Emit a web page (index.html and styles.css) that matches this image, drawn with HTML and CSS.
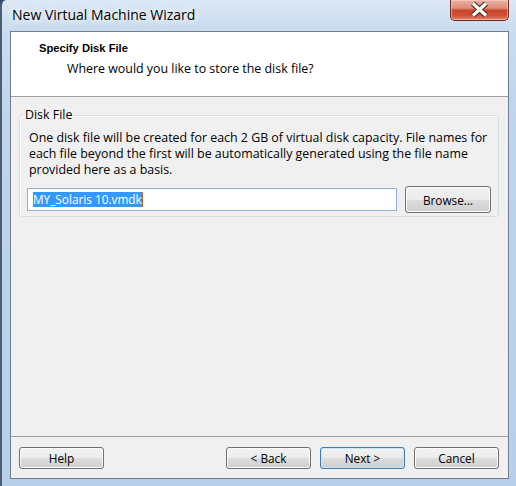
FILE: index.html
```html
<!DOCTYPE html>
<html>
<head>
<meta charset="utf-8">
<title>New Virtual Machine Wizard</title>
<link rel="stylesheet" href="styles.css">
</head>
<body>
<div class="window">
  <div class="titlebar">
    <span class="title">New Virtual Machine Wizard</span>
    <div class="close">
      <svg width="57" height="19" viewBox="0 0 57 19">
        <path d="M22 3.5 L35 15.5 M35 3.5 L22 15.5" stroke="#4a2a26" stroke-width="5.5" fill="none"/>
        <path d="M22 3.5 L35 15.5 M35 3.5 L22 15.5" stroke="#ffffff" stroke-width="3.2" fill="none"/>
      </svg>
    </div>
  </div>
  <div class="client">
    <div class="header">
      <div class="h-title">Specify Disk File</div>
      <div class="h-sub">Where would you like to store the disk file?</div>
    </div>
    <div class="content">
      <fieldset class="group">
        <legend class="legend">Disk File</legend>
        <p class="desc">One disk file will be created for each 2 GB of virtual disk capacity. File names for<br>each file beyond the first will be automatically generated using the file name<br>provided here as a basis.</p>
        <div class="row">
          <div class="input"><span class="sel">MY_Solaris 10.vmdk</span><span class="caret"></span></div>
          <button class="btn browse">Browse...</button>
        </div>
      </fieldset>
    </div>
    <div class="footer">
      <button class="btn help">Help</button>
      <button class="btn">&lt; Back</button>
      <button class="btn default">Next &gt;</button>
      <button class="btn">Cancel</button>
    </div>
  </div>
</div>
</body>
</html>
```
FILE: styles.css
```css
html, body {
  margin: 0;
  padding: 0;
}
body {
  width: 516px;
  height: 486px;
  overflow: hidden;
  background: #2d4d70;
  font-family: "Open Sans", "Liberation Sans", Arial, sans-serif;
  font-size: 12.4px;
  color: #000;
}
.window {
  width: 516px;
  height: 486px;
  box-sizing: border-box;
  display: flex;
  flex-direction: column;
  border-left: 2px solid #4c5d70;
  border-top-left-radius: 6px;
  background: linear-gradient(180deg, #dce8f5 0px, #cadcf0 28px, #bfd5ed 120px, #b7cfe9 100%);
}
.titlebar {
  height: 31px;
  flex: none;
  display: flex;
  align-items: flex-start;
}
.title {
  padding: 6px 0 0 10px;
  font-family: "Open Sans", "Liberation Sans", sans-serif;
  font-size: 14px;
  line-height: 18px;
  color: #000;
  text-shadow: 0 0 6px rgba(255, 255, 255, 0.95), 0 0 10px rgba(255, 255, 255, 0.8);
}
.close {
  margin-left: auto;
  margin-right: 7px;
  width: 59px;
  height: 21px;
  box-sizing: border-box;
  border: 1px solid #6b2a1f;
  border-top: none;
  border-radius: 0 0 5px 5px;
  background: linear-gradient(180deg, #e9b1a4 0%, #dd8d7a 40%, #c9472c 52%, #cf5034 78%, #e0886f 100%);
  box-shadow: inset 0 0 0 1px rgba(255, 220, 210, 0.5);
  display: flex;
}
.client {
  flex: 1;
  margin: 0 7px 7px 8px;
  border: 1px solid #6f7d8d;
  background: #f0f0f0;
  display: flex;
  flex-direction: column;
}
.header {
  flex: none;
  height: 65px;
  box-sizing: border-box;
  background: #fff;
  border-bottom: 1px solid #a0a0a0;
  padding: 8px 0 0 28px;
}
.h-title {
  font-family: "Liberation Sans", Arial, sans-serif;
  font-size: 11.2px;
  font-weight: bold;
  line-height: 16px;
}
.h-sub {
  margin: 5px 0 0 28px;
  line-height: 16px;
}
.content {
  flex: 1;
  padding: 10px 9px 0 8px;
}
.group {
  margin: 0;
  border: 1px solid #d5dfe5;
  border-radius: 3px;
  box-shadow: inset 1px 1px 0 #fff;
  padding: 7px 7px 3px 7px;
}
.legend {
  padding: 0 2px;
  margin-left: -4px;
  line-height: 16px;
}
.desc {
  margin: 0 0 8px 2px;
  line-height: 16px;
  white-space: nowrap;
}
.row {
  display: flex;
  align-items: center;
  gap: 8px;
}
.input {
  flex: 1;
  height: 23px;
  box-sizing: border-box;
  border: 1px solid #8fb2d6;
  background: #fff;
  padding-left: 5px;
  display: flex;
  align-items: center;
  font-size: 11.8px;
}
.sel {
  background: #3399ff;
  color: #fff;
  line-height: 15px;
}
.caret {
  width: 1px;
  height: 15px;
  background: #c8661c;
}
.btn {
  width: 85px;
  height: 22px;
  box-sizing: border-box;
  padding: 0;
  border: 1px solid #707070;
  border-radius: 3px;
  background: linear-gradient(180deg, #f2f2f2 0%, #ebebeb 50%, #dddddd 50%, #cfcfcf 100%);
  box-shadow: inset 0 0 0 1px #fbfbfb;
  font-family: inherit;
  font-size: 11.8px;
  color: #000;
}
.browse {
  width: 86px;
  height: 27px;
}
.default {
  border-color: #3c7fb1;
  box-shadow: inset 0 0 0 1px #c7e6f7;
}
.footer {
  flex: none;
  border-top: 1px solid #a0a0a0;
  padding: 10px 9px 9px 8px;
  display: flex;
  gap: 9px;
}
.help {
  margin-right: auto;
}
```
